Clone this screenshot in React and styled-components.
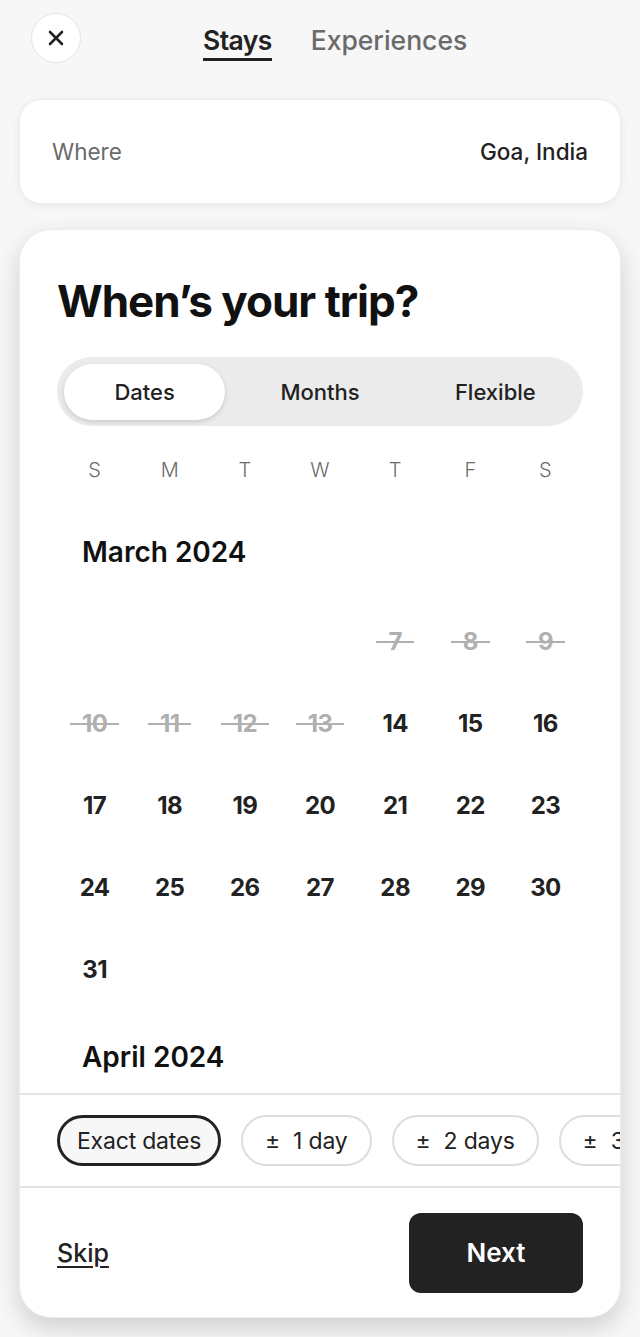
import styled, { createGlobalStyle } from 'styled-components';

const GlobalStyle = createGlobalStyle`
  html, body {
    margin: 0;
    padding: 0;
    background: #f7f7f7;
  }
  body {
    font-family: Inter, "Noto Sans", sans-serif;
    color: #222222;
    -webkit-font-smoothing: antialiased;
  }
`;

const Page = styled.div`
  width: 640px;
  height: 1337px;
  box-sizing: border-box;
  padding: 13px 19px 0;
  display: flex;
  flex-direction: column;
  overflow: hidden;
`;

const TopBar = styled.div`
  display: flex;
  align-items: center;
  height: 50px;
  padding-left: 12px;
`;

const CloseButton = styled.button`
  width: 50px;
  height: 50px;
  border-radius: 50%;
  border: 1px solid #e4e4e4;
  background: #ffffff;
  display: flex;
  align-items: center;
  justify-content: center;
  padding: 0;
  margin-right: 122px;
`;

const Tabs = styled.div`
  display: flex;
  gap: 39px;
  margin-top: 9px;
`;

const Tab = styled.span`
  font-size: 26.5px;
  font-weight: ${p => (p.$active ? 600 : 500)};
  letter-spacing: ${p => (p.$active ? '-0.6px' : '0')};
  color: ${p => (p.$active ? '#222222' : '#6a6a6a')};
  line-height: 32px;
  padding-bottom: 2px;
  border-bottom: 3px solid ${p => (p.$active ? '#222222' : 'transparent')};
`;

const WhereCard = styled.div`
  margin-top: 36px;
  height: 105px;
  border-radius: 22px;
  background: #ffffff;
  border: 1px solid #ececec;
  box-shadow: 0 2px 8px rgba(0, 0, 0, 0.06);
  box-sizing: border-box;
  display: flex;
  align-items: center;
  justify-content: space-between;
  padding: 0 32px;
  font-size: 22.5px;
`;

const WhereLabel = styled.span`
  color: #6a6a6a;
  font-weight: 400;
`;

const WhereValue = styled.span`
  color: #222222;
  font-weight: 500;
`;

const MainCard = styled.div`
  margin-top: 25px;
  height: 1089px;
  border-radius: 32px;
  background: #ffffff;
  border: 1px solid #ececec;
  box-sizing: border-box;
  box-shadow: 0 10px 24px rgba(0, 0, 0, 0.16);
  display: flex;
  flex-direction: column;
  overflow: hidden;
`;

const Header = styled.div`
  padding: 45px 37px 0;
`;

const Title = styled.h1`
  margin: 0;
  font-size: 44px;
  font-weight: 700;
  letter-spacing: -1px;
  line-height: 52px;
  color: #111111;
`;

const Segmented = styled.div`
  margin-top: 30px;
  height: 69px;
  border-radius: 35px;
  background: #ebebeb;
  display: grid;
  grid-template-columns: repeat(3, 1fr);
  align-items: center;
`;

const Segment = styled.div`
  height: 56px;
  margin: 0 7px;
  border-radius: 28px;
  display: flex;
  align-items: center;
  justify-content: center;
  font-size: 22px;
  font-weight: 500;
  color: #222222;
  background: ${p => (p.$active ? '#ffffff' : 'transparent')};
  box-shadow: ${p => (p.$active ? '0 2px 5px rgba(0,0,0,0.14)' : 'none')};
`;

const Weekdays = styled.div`
  display: grid;
  grid-template-columns: repeat(7, 1fr);
  height: 30px;
  margin-top: 29px;
  align-items: center;
`;

const Weekday = styled.span`
  text-align: center;
  font-size: 20px;
  font-weight: 300;
  color: #6a6a6a;
`;

const Scroller = styled.div`
  flex: 1;
  overflow: hidden;
  padding: 0 37px;
`;

const MonthTitle = styled.h2`
  margin: ${p => (p.$first ? '50px' : '30px')} 0 0 25px;
  font-size: 28px;
  font-weight: 600;
  line-height: 34px;
  color: #111111;
`;

const DaysGrid = styled.div`
  display: grid;
  grid-template-columns: repeat(7, 1fr);
  grid-auto-rows: 82px;
  margin-top: 31px;
`;

const DayCell = styled.div`
  display: flex;
  align-items: center;
  justify-content: center;
`;

const DayNum = styled.span`
  position: relative;
  padding: 0 12px;
  font-size: 24px;
  font-weight: 700;
  letter-spacing: -0.6px;
  color: ${p => (p.$past ? '#b0b0b0' : '#222222')};

  ${p => p.$past && `
    &::after {
      content: '';
      position: absolute;
      left: 0;
      right: 0;
      top: 50%;
      height: 2px;
      background: #b0b0b0;
    }
  `}
`;

const Chips = styled.div`
  border-top: 2px solid #e4e4e4;
  border-bottom: 2px solid #e4e4e4;
  padding: 20px 37px;
  display: flex;
  gap: 20px;
  white-space: nowrap;
  overflow: hidden;
`;

const Chip = styled.div`
  flex-shrink: 0;
  height: 51px;
  box-sizing: border-box;
  border-radius: 26px;
  border: ${p => (p.$active ? '3px solid #222222' : '2px solid #dddddd')};
  background: ${p => (p.$active ? '#f7f7f7' : '#ffffff')};
  padding: 0 ${p => (p.$active ? '17px' : '22px')};
  display: flex;
  align-items: center;
  gap: 13px;
  font-size: 23px;
  font-weight: 400;
  letter-spacing: -0.2px;
  color: #222222;
`;

const Footer = styled.div`
  height: 129px;
  display: flex;
  align-items: center;
  justify-content: space-between;
  padding: 0 37px;
  flex-shrink: 0;
`;

const SkipLink = styled.a`
  font-size: 25px;
  font-weight: 500;
  color: #222222;
  text-decoration: underline;
  text-underline-offset: 4px;
  text-decoration-thickness: 2px;
`;

const NextButton = styled.button`
  width: 174px;
  height: 80px;
  border: none;
  border-radius: 12px;
  background: #222222;
  color: #ffffff;
  font-family: inherit;
  font-size: 26px;
  font-weight: 600;
`;

const weekdays = ['S', 'M', 'T', 'W', 'T', 'F', 'S'];
// only days from the 7th onward are visible, the first week row starts on Thursday
const marchDays = [null, null, null, null];
for (let d = 7; d <= 31; d++) marchDays.push(d);

const App = () => {
  return (
    <>
      <GlobalStyle />
      <Page>
        <TopBar>
          <CloseButton aria-label='Close'>
            <svg width='18' height='18' viewBox='0 0 18 18'>
              <path d='M3 3 L15 15 M15 3 L3 15' stroke='#222' strokeWidth='2.6' strokeLinecap='round' />
            </svg>
          </CloseButton>
          <Tabs>
            <Tab $active>Stays</Tab>
            <Tab>Experiences</Tab>
          </Tabs>
        </TopBar>

        <WhereCard>
          <WhereLabel>Where</WhereLabel>
          <WhereValue>Goa, India</WhereValue>
        </WhereCard>

        <MainCard>
          <Header>
            <Title>When’s your trip?</Title>
            <Segmented>
              <Segment $active>Dates</Segment>
              <Segment>Months</Segment>
              <Segment>Flexible</Segment>
            </Segmented>
            <Weekdays>
              {weekdays.map((w, i) => <Weekday key={i}>{w}</Weekday>)}
            </Weekdays>
          </Header>

          <Scroller>
            <MonthTitle $first>March 2024</MonthTitle>
            <DaysGrid>
              {marchDays.map((d, i) => (
                <DayCell key={i}>
                  {d && <DayNum $past={d < 14}>{d}</DayNum>}
                </DayCell>
              ))}
            </DaysGrid>
            <MonthTitle>April 2024</MonthTitle>
          </Scroller>

          <Chips>
            <Chip $active>Exact dates</Chip>
            <Chip><span>±</span><span>1 day</span></Chip>
            <Chip><span>±</span><span>2 days</span></Chip>
            <Chip><span>±</span><span>3 days</span></Chip>
          </Chips>

          <Footer>
            <SkipLink>Skip</SkipLink>
            <NextButton>Next</NextButton>
          </Footer>
        </MainCard>
      </Page>
    </>
  );
};

export default App;
